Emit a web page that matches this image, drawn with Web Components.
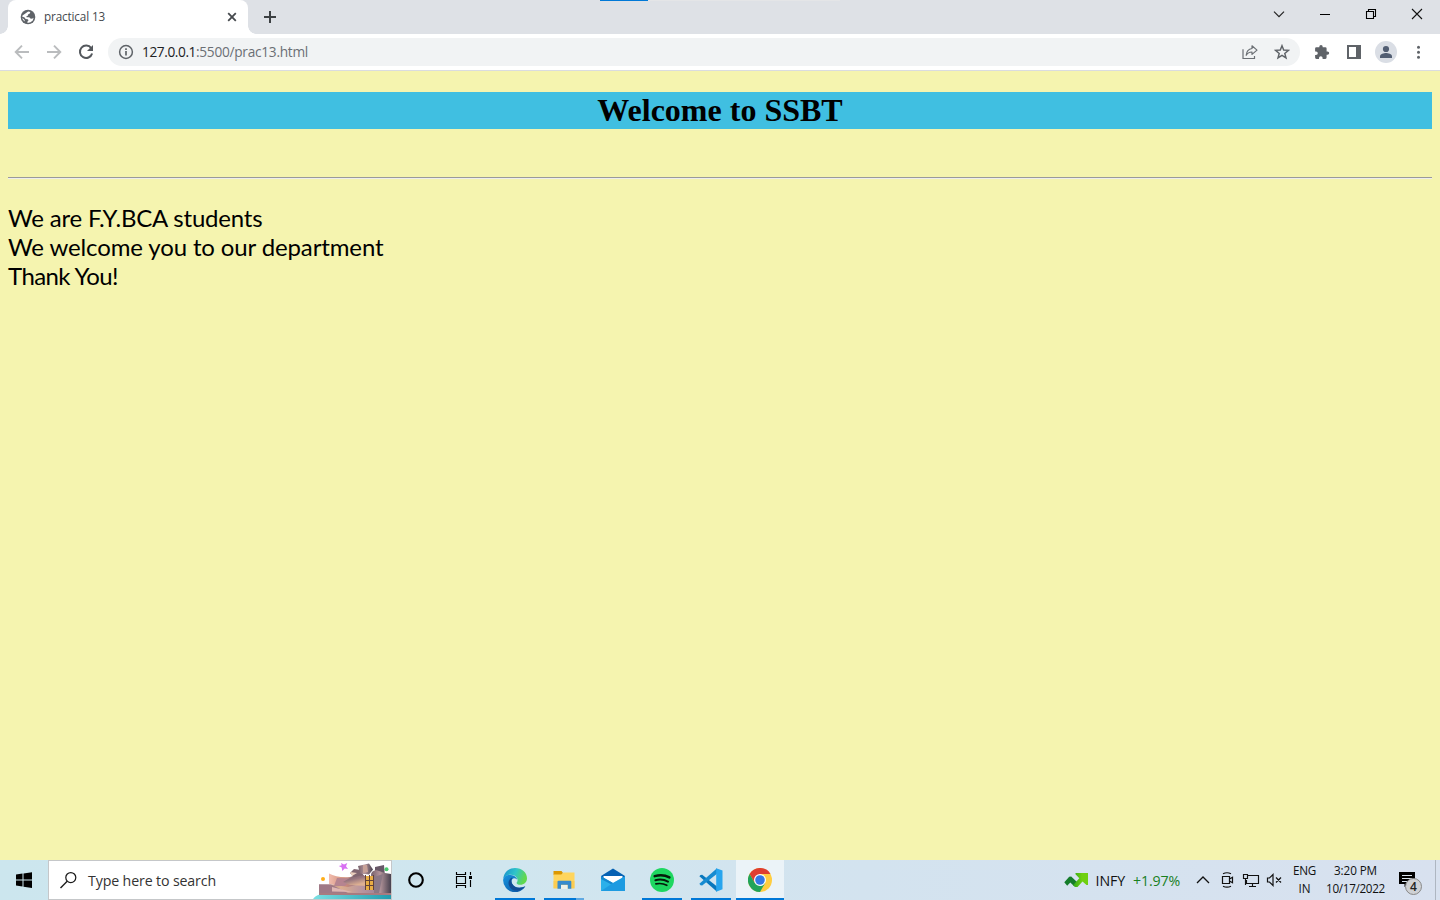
<!DOCTYPE html>
<html lang="en">
<head>
<meta charset="utf-8">
<title>practical 13</title>
<style>
html,body{margin:0;height:100%;overflow:hidden}
</style>
</head>
<body>
<desktop-screen></desktop-screen>
<script>
const ICONS = {
globe:[16,16,'<circle cx="8" cy="8" r="7.300" fill="#5f6368"/><path d="M8.200 2.500 10.300 2.900 9.800 4.600 8 5.400 7.800 6.800 6.400 7.300 6.600 8.300 9.300 8.300 10.400 9.600 12 9.700 13.600 8.800 12.800 11.400 10.500 13.300 7.400 13.900 7.600 12.200 8.600 11.300 7.600 10.300 5.600 10.100 4.600 8.600 2.200 7.400 2.200 8.800 4.600 11 4.700 12.400 2.900 10.700 2.200 8.400 2.500 6.400Z" fill="#fff"/>'],
close:[16,16,'<path d="M4.200 4.200 11.800 11.800M11.800 4.200 4.200 11.800" stroke="#45494d" stroke-width="1.8"/>'],
plus:[16,16,'<path d="M8 2v12M2 8h12" stroke="#3c4043" stroke-width="2"/>'],
down:[16,16,'<path d="M3 5.600 8 10.600 13 5.600" fill="none" stroke="#222" stroke-width="1.200"/>'],
min:[16,16,'<path d="M3 8.500h10" stroke="#000"/>'],
restore:[16,16,'<path d="M3.500 5.500h7v7h-7zM5.500 5V3.500h7v7H11" fill="none" stroke="#000" stroke-width="1.1"/>'],
winclose:[16,16,'<path d="M3 3l10 10M13 3 3 13" stroke="#111" stroke-width="1.1"/>'],
back:[16,16,'<path d="M15 8H2M8 1.600 1.700 8 8 14.400" fill="none" stroke="#babcbe" stroke-width="1.9"/>'],
fwd:[16,16,'<path d="M1 8h13M8 1.600 14.300 8 8 14.400" fill="none" stroke="#babcbe" stroke-width="1.9"/>'],
reload:[16,16,'<path d="M13.200 4.200A6.200 6.200 0 1 0 14.100 9.500" fill="none" stroke="#54585d" stroke-width="2"/><path d="M15 1v6H9z" fill="#54585d"/>'],
info:[16,16,'<circle cx="8" cy="8" r="6.400" fill="none" stroke="#5f6368" stroke-width="1.500"/><path d="M8 7v4.600M8 4.200v1.700" stroke="#5f6368" stroke-width="1.700"/>'],
share:[16,16,'<path d="M1 5.200v9.300h11.500V12" fill="none" stroke="#6b6f74" stroke-width="1.200"/><path d="M10 1.800 15 6.100 10 10.400V8C7.200 8 5.400 9 4.200 11.300 4.500 7.500 6.200 5 10 4.500Z" fill="none" stroke="#6b6f74" stroke-width="1.200" stroke-linejoin="round"/>'],
star:[16,16,'<path d="m8 1.700 1.700 4.300 4.700.400-3.600 3 1.200 4.500L8 11.400l-4 2.500 1.200-4.500-3.600-3 4.700-.400Z" fill="none" stroke="#5f6368" stroke-width="1.450"/>'],
puzzle:[16,16,'<path d="M5.300 2.700a1.700 1.700 0 0 1 3.400 0V3.300h2.600q1.300 0 1.300 1.300v2.800h.900a1.700 1.700 0 0 1 0 3.400h-.9v2.800q0 1.300-1.300 1.300H8.600V14a1.800 1.800 0 0 0-3.600 0v.9H2.400q-1.300 0-1.300-1.300v-2.600h.9a1.800 1.800 0 0 0 0-3.600h-.9V4.600q0-1.300 1.300-1.300h2.900Z" fill="#5f6368"/>'],
panel:[16,16,'<path d="M2 2h12v12H2z" fill="none" stroke="#5f6368" stroke-width="2"/><path d="M10 2h4v12h-4z" fill="#5f6368"/>'],
avatar:[22,22,'<circle cx="11" cy="11" r="11" fill="#dadee5"/><circle cx="11" cy="8" r="3.100" fill="#525e73"/><path d="M5 17v-1.600c0-2.600 4-3.400 6-3.400s6 .8 6 3.400V17Z" fill="#525e73"/>'],
dots:[16,16,'<g fill="#5f6368"><circle cx="8.500" cy="3.300" r="1.500"/><circle cx="8.500" cy="8.300" r="1.500"/><circle cx="8.500" cy="13.300" r="1.500"/></g>'],
win:[16,16,'<path d="M0 2.600 6.500 1.600V7.500H0ZM7.500 1.400 16 .2V7.500H7.500ZM0 8.500h6.500v6L0 13.600ZM7.500 8.500H16V16L7.500 14.700Z"/>'],
search:[18,18,'<circle cx="10.800" cy="6.600" r="5" fill="none" stroke="#1b1b1b" stroke-width="1.250"/><path d="M7.200 10.300.5 16.900" stroke="#1b1b1b" stroke-width="1.400"/>'],
cortana:[18,18,'<circle cx="9" cy="9" r="6.800" fill="none" stroke="#000" stroke-width="2.100"/>'],
taskview:[18,18,'<path d="M1.500 5.500h9v7h-9zM1.500 1v2.500h9V1M1.500 17v-2.500h9V17M15.500 1v3M15.500 9v7" fill="none" stroke="#000" stroke-width="1.150"/><path d="M14 5h3v3h-3z"/>'],
edge:[24,24,'<defs><linearGradient id="a" x1="0" y1="0" x2="1" y2=".3"><stop stop-color="#168dce"/><stop offset=".55" stop-color="#30c5c9"/><stop offset="1" stop-color="#62d84e"/></linearGradient><linearGradient id="b" x1="0" y1="0" x2="1" y2="1"><stop stop-color="#1794df"/><stop offset="1" stop-color="#0c52a0"/></linearGradient></defs><path d="M.2 11C1 4 6 0 12 0c7 0 12 4.800 12 10.200 0 4-3 6.500-6.700 6.500-2.500 0-4-1-3.600-2.200 1.100-1.200 1.100-3 .2-4.500C11.200 5.300 3 5.600.2 11Z" fill="url(#a)"/><path d="M.1 12C.6 8.300 4 6.500 7.800 7c3.300.300 6 2.300 6.200 4.400-3.500-3.200-6.800.3-5 4.200 2 4.500 8 5.200 13.300 2.700C18 25.800 8 26 3 20A12 12 0 0 1 .1 12Z" fill="url(#b)"/><path d="M9 9.600c-4.200 2.300-4.400 7-1.500 10.400 3.600 4 10 3.200 14.800-1.600-5.300 2.400-11.300 1.700-13.300-2.800-1-2.300-.8-4.500.6-5.500Z" fill="#124b94"/>'],
folder:[24,24,'<path d="M1.500 3h8l1.500 2-1.500 2h-8z" fill="#dc9700"/><path d="M1.500 6.500h8l2-2h11v15.700h-21z" fill="#ffd55d"/><path d="M1.500 13h21v7.500h-21z" fill="#fbc84b" opacity=".65"/><path d="M5.500 20.800v-7q0-1 1-1h11.800q1 0 1 1v7h-3.700v-4H9v4z" fill="#368bce"/><path d="M9 17h6.600v4H9z" fill="#eef1e9"/>'],
mail:[24,24,'<path d="M0 8 12 .5 24 8v5H0z" fill="#0661b3"/><path d="M2.500 8h19v9h-19z" fill="#fff"/><path d="M0 8.200 12 15 24 8.200V23H0Z" fill="#2bb0ea"/><path d="m0 23 12-8 12-6.800V23Z" fill="#1690dc" opacity=".65"/><path d="M0 8.200 12 15l-2 1.200L0 11Z" fill="#1588cf"/>'],
spotify:[24,24,'<circle cx="12" cy="12" r="12" fill="#1ed760"/><g fill="none" stroke="#051a0a" stroke-linecap="round"><path d="M4.700 8.100c5-1.500 10.600-1 14.700 1.300" stroke-width="2.500"/><path d="M5.400 12.200c4.500-1.200 8.800-.7 12.600 1.400" stroke-width="2"/><path d="M5.900 15.900c4-.8 7.500-.5 10.900 1.400" stroke-width="1.700"/></g>'],
vscode:[24,24,'<path d="m1.500 7 1.700-.3L18 18.500v5.300L.4 8.200Z" fill="#0877bd"/><path d="m1.500 17.200 1.700.3L18 5.700V.2L.4 15.800Z" fill="#168bd1"/><path d="M17.200.2 23.500 2.500v18.700l-6.300 2.600Z" fill="#28a5ee"/>'],
chrome:[24,24,'<circle cx="12" cy="12" r="12" fill="#ffcd40"/><path d="M1.600 6A12 12 0 0 1 22.400 6H12L6.800 15Z" fill="#df3e30"/><path d="M1.600 6A12 12 0 0 0 12 24l5.200-9H6.800Z" fill="#21a45a"/><circle cx="12" cy="12" r="6" fill="#fff"/><circle cx="12" cy="12" r="4.800" fill="#3478e5"/>'],
stock:[24,16,'<defs><linearGradient id="s" x2="1"><stop stop-color="#2fa61a"/><stop offset=".6" stop-color="#6fd010"/></linearGradient></defs><path d="M.3 10.300 5.200 4.800 7.200 4.600 13.500 10.500 10.500 14.500 6.300 10.600 3.200 13.700Z" fill="#147c2a"/><path d="M9 13.300 15.300 6.300 11.500 2.300V1H24v12h-1.500l-4-3.400-5 5.400h-2.300Z" fill="url(#s)"/>'],
up:[16,16,'<path d="m2 11 6-6 6 6" fill="none" stroke="#111" stroke-width="1.300"/>'],
cam:[16,16,'<path d="M3.500 4.500h7v7h-7zM10.500 7l3-1.700v5.400l-3-1.700M4 1.800Q8-.3 12 1.800M4 14.200q4 2 8 0" fill="none" stroke="#111" stroke-width="1.200"/>'],
net:[18,16,'<path d="M5.500 3.500h11v8h-12V8M10.500 12v2.500M7 14.500h7M1.500 2.500h4v4h-4zM3.500 6v7" fill="none" stroke="#111" stroke-width="1.150"/>'],
sound:[16,16,'<path d="M1.500 6h2L7 2.500v11L3.500 10h-2zM10 5.500l5 5M15 5.500l-5 5" fill="none" stroke="#111" stroke-width="1.200"/>'],
note:[18,18,'<path d="M1 1h16v12h-7l-3.500 3v-3H1z"/><path d="M4 4.500h10M4 7.500h10M4 10.500h7" stroke="#dae4ee"/>'],
gug:[78,37,'<defs><linearGradient id="g" x2="1"><stop stop-color="#98757f"/><stop offset=".3" stop-color="#dcae8e"/><stop offset=".6" stop-color="#b8949f"/><stop offset="1" stop-color="#8b7690"/></linearGradient><linearGradient id="h"><stop stop-color="#75606a"/><stop offset=".45" stop-color="#b3949a"/><stop offset="1" stop-color="#48414f"/></linearGradient><linearGradient id="k" x1="0" y1="0" x2=".4" y2="1"><stop stop-color="#5c5059"/><stop offset=".6" stop-color="#97757f"/><stop offset="1" stop-color="#deb092"/></linearGradient><linearGradient id="m" x2="1"><stop stop-color="#f2bcae"/><stop offset=".5" stop-color="#cf8d77"/><stop offset="1" stop-color="#8e7590"/></linearGradient><linearGradient id="w" x2="1"><stop stop-color="#7be0e3"/><stop offset="1" stop-color="#229cae"/></linearGradient></defs><path d="M0 37Q4 31.500 12 32h66v5Z" fill="url(#w)"/><path d="M6 22.500h20l20-5 32 3V32H6Z" fill="url(#g)"/><path d="M16 11.500Q24 16 37 15l7-2 3 9-12 3-19-3Z" fill="url(#m)"/><path d="m24 16 16 .5-8 7.500H21Z" fill="#b68490"/><path d="M30 20 47 10l6 5v9l-16-1Z" fill="url(#k)"/><path d="m37 11 4-4 7 1 2 5-9 2Z" fill="#806570"/><path d="m37 10 7 1-5 3Z" fill="#e9cdbb"/><path d="m45 4 11-2.500 4 6-4 5-9-1Z" fill="url(#h)"/><path d="m50 3 4 0 1 7-5 1Z" fill="#c7a197"/><path d="m62 5 9-2 1 12h-10Z" fill="#685868"/><path d="M58 13q0-4 5-5l9 3 6 1v19H62Z" fill="url(#h)"/><path d="m61 15 9-3-4 19h-5Z" fill="#8b7885"/><path d="M52 14h9v14h-9z" fill="#e8ad44"/><path d="M52 18.500h9m-9 5h9M56.500 13v15M60.500 13v15M52.500 13v15" stroke="#614239"/><path d="M6 22.500h12l18 9H6Z" fill="#a07986"/><path d="m19 25 20 5-20-.5Z" fill="#dfb6b3"/><path d="M6 31h72v2H6z" fill="#a87b80"/><circle cx="10" cy="17" r="2" fill="#ffae19"/><circle cx="73.500" cy="7.200" r="2" fill="#4bc96d"/><path d="m28 1 3 1.600L34.300 1 33 4.300 35 7l-3.300-.5L29.300 9l-.6-3.500-3-1.500 3-.7Z" fill="#d870f2"/>']
};
class UiIcon extends HTMLElement{
  connectedCallback(){
    const [w,h,s]=ICONS[this.getAttribute('name')];
    this.attachShadow({mode:'open'}).innerHTML=`<style>:host{display:block;flex:none;width:${w}px;height:${h}px}svg{display:block}</style><svg width="${w}" height="${h}" viewBox="0 0 ${w} ${h}">${s}</svg>`;
  }
}
customElements.define('ui-icon',UiIcon);

/* Text run whose tracking is set so that it spans the given width. */
class FitText extends HTMLElement{
  connectedCallback(){
    const r=this.attachShadow({mode:'open'});
    r.innerHTML='<style>:host{display:block;flex:none;white-space:pre}span{display:inline-block}</style><span><slot></slot></span>';
    const fit=()=>{
      const s=r.querySelector('span');s.style.letterSpacing='0';
      const w=s.getBoundingClientRect().width,n=this.textContent.length;
      if(w)s.style.letterSpacing=((+this.getAttribute('w')-w)/n).toFixed(3)+'px';
    };
    fit();requestAnimationFrame(fit);
  }
}
customElements.define('fit-text',FitText);

const define=(name,html)=>customElements.define(name,class extends HTMLElement{
  constructor(){super();this.attachShadow({mode:'open'}).innerHTML=html;}
});

define('tab-strip',`<style>
:host{display:flex;height:34px;background:#dee1e6;position:relative;font:11.7px/16px "Open Sans",sans-serif;color:#45494d}
.tab{position:relative;margin-left:8px;width:240px;box-sizing:border-box;height:34px;padding:0 8px 0 12px;background:#fff;border-radius:8px 8px 0 0;display:flex;align-items:center;gap:8px}
.tab fit-text{padding-bottom:2px}
.tab:before,.tab:after{content:"";position:absolute;bottom:0;width:8px;height:8px}
.tab:before{left:-8px;background:radial-gradient(circle at 0 0,#dee1e6 7.5px,#fff 8px)}
.tab:after{right:-8px;background:radial-gradient(circle at 100% 0,#dee1e6 7.5px,#fff 8px)}
.x{margin-left:auto}.plus{margin:9px 0 0 14px}
.wins{display:flex;margin-left:auto}.wins div{width:46px;display:flex;justify-content:center;padding-top:6px}
.load{position:absolute;left:600px;top:0;width:240px;height:1px;background:linear-gradient(90deg,#0078d7 48px,#e4e5e7 48px)}
</style><div class="tab"><ui-icon name="globe"></ui-icon><fit-text w="61">practical 13</fit-text><ui-icon class="x" name="close"></ui-icon></div><ui-icon class="plus" name="plus"></ui-icon>
<div class="wins"><div><ui-icon name="down"></ui-icon></div><div><ui-icon name="min"></ui-icon></div><div><ui-icon name="restore"></ui-icon></div><div><ui-icon name="winclose"></ui-icon></div></div><div class="load"></div>`);

define('tool-bar',`<style>
:host{display:flex;height:36px;background:#fff;border-bottom:1px solid #dadce0;align-items:center;padding:0 14px;font:13.7px/20px "Open Sans",sans-serif;color:#6b6f74}
.nav{display:flex;gap:16px}.box{display:flex;align-items:center;flex:1;height:28px;border-radius:14px;background:#f1f3f4;margin:0 14px;padding:0 10px;box-sizing:border-box}
.box fit-text:first-of-type{margin-left:8px;color:#202124}.acts{display:flex;gap:16px;margin-left:auto}
.right{display:flex;align-items:center;gap:16px}.right .av{margin:0 -3px}
</style><div class="nav"><ui-icon name="back"></ui-icon><ui-icon name="fwd"></ui-icon><ui-icon name="reload"></ui-icon></div>
<div class="box"><ui-icon name="info"></ui-icon><fit-text w="54">127.0.0.1</fit-text><fit-text w="112">:5500/prac13.html</fit-text><div class="acts"><ui-icon name="share"></ui-icon><ui-icon name="star"></ui-icon></div></div>
<div class="right"><ui-icon name="puzzle"></ui-icon><ui-icon name="panel"></ui-icon><ui-icon class="av" name="avatar"></ui-icon><ui-icon name="dots"></ui-icon></div>`);

define('web-page',`<style>
:host{display:block;flex:1;background:#f5f4af;padding:21px 8px 0;box-sizing:border-box;color:#000}
h1{margin:0;height:37px;background:#40bfe1;font:bold 32px/37px "Liberation Serif",serif;text-align:center}
hr{margin:48px 0 0;border:0;height:2px;background:linear-gradient(#9a9a9a 1px,#eeeeee 1px)}
.copy{margin-top:24px;font:24px/29px Lato,sans-serif}
</style><h1>Welcome to SSBT</h1><hr><div class="copy"><fit-text w="254.500">We are F.Y.BCA students</fit-text><fit-text w="375.500">We welcome you to our department</fit-text><fit-text w="110">Thank You!</fit-text></div>`);

define('task-app',`<style>
:host{display:flex;flex:none;width:48px;height:40px;align-items:center;justify-content:center;box-sizing:border-box;background:linear-gradient(var(--bar,transparent),var(--bar,transparent)) center bottom/var(--len,40px) 2px no-repeat,var(--bg,transparent)}
</style><slot></slot>`);

define('task-bar',`<style>
:host{display:flex;height:40px;background:linear-gradient(90deg,#cce6ee 0,#d0e6ef 35%,#d3e3ef 60%,#d8e1ef 100%);font:14.2px/20px "Open Sans",sans-serif;color:#111}
.search{width:344px;height:40px;box-sizing:border-box;border:1px solid #c5c7c9;background:#fff;display:flex;align-items:center;padding-left:11px;color:#333}
.search fit-text{margin-left:10px;padding-top:2px}.search .pic{margin:1px 0 0 auto}
.apps{display:flex;gap:1px;margin-left:3px}.run{--bar:#0078d7}.active{--len:48px;--bg:#ebf3f8}
.files{background:linear-gradient(90deg,#0078d7 32px,#60a9e2 32px) center bottom/40px 2px no-repeat}
.tray{display:flex;margin-left:auto;align-items:center}
.infy,.pct{padding-top:2px}.infy{margin-left:8px}.pct{margin:0 15px 0 8px;color:#19801e}
.two{font-size:11.7px;line-height:18px;display:flex;flex-direction:column;align-items:center;padding-bottom:2px}
.note{position:relative;margin-left:13px;margin-right:1px}.note b{position:absolute;left:7px;top:7px;width:17px;height:17px;box-sizing:border-box;border:1px solid #888;border-radius:50%;background:#cfd1d4;font:600 12px/15px "Open Sans",sans-serif;text-align:center;color:#222}
.edge{height:40px;border-left:1px solid #aeb6c1;width:4px;margin-left:18px}
</style>
<task-app><ui-icon name="win"></ui-icon></task-app>
<div class="search"><ui-icon name="search"></ui-icon><fit-text w="128">Type here to search</fit-text><ui-icon class="pic" name="gug"></ui-icon></div>
<task-app><ui-icon name="cortana"></ui-icon></task-app><task-app><ui-icon name="taskview"></ui-icon></task-app>
<div class="apps"><task-app class="run"><ui-icon name="edge"></ui-icon></task-app><task-app class="files"><ui-icon name="folder"></ui-icon></task-app><task-app><ui-icon name="mail"></ui-icon></task-app><task-app class="run"><ui-icon name="spotify"></ui-icon></task-app><task-app class="run"><ui-icon name="vscode"></ui-icon></task-app><task-app class="run active"><ui-icon name="chrome"></ui-icon></task-app></div>
<div class="tray"><ui-icon name="stock"></ui-icon><fit-text class="infy" w="29.500">INFY</fit-text><fit-text class="pct" w="47">+1.97%</fit-text>
<ui-icon name="up"></ui-icon><ui-icon name="cam" style="margin-left:8px"></ui-icon><ui-icon name="net" style="margin-left:7px"></ui-icon><ui-icon name="sound" style="margin-left:6px"></ui-icon>
<div class="two" style="margin-left:11px"><fit-text w="23">ENG</fit-text><fit-text w="12">IN</fit-text></div><div class="two" style="margin-left:10px"><fit-text w="43">3:20 PM</fit-text><fit-text w="59">10/17/2022</fit-text></div>
<div class="note"><ui-icon name="note"></ui-icon><b>4</b></div><div class="edge"></div></div>`);

define('desktop-screen',`<style>:host{display:flex;flex-direction:column;width:1440px;height:900px;overflow:hidden}</style><tab-strip></tab-strip><tool-bar></tool-bar><web-page></web-page><task-bar></task-bar>`);
</script>
</body>
</html>
